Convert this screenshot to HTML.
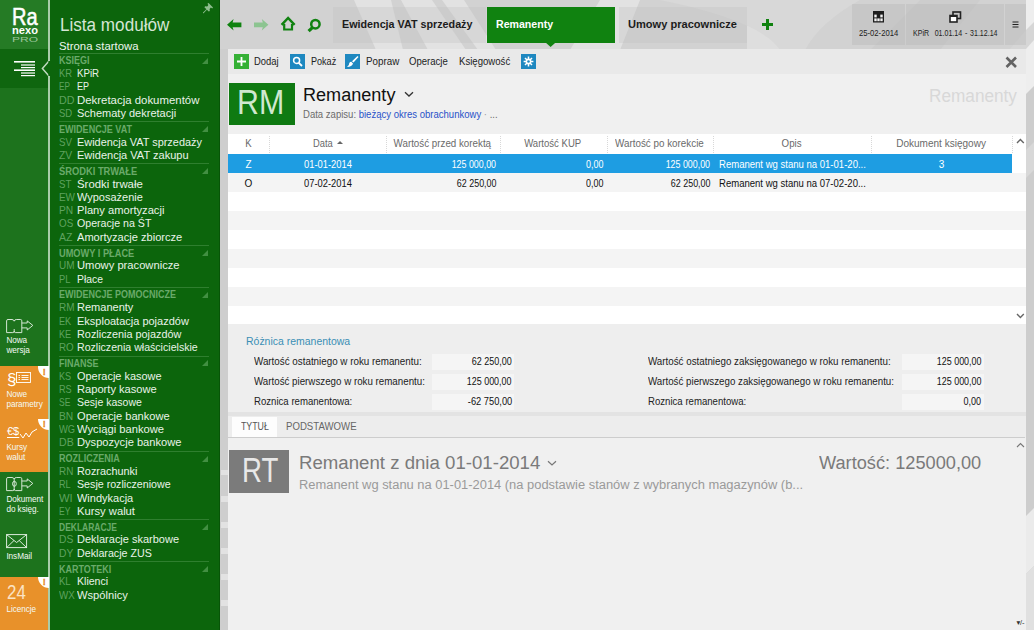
<!DOCTYPE html>
<html lang="pl"><head><meta charset="utf-8"><title>Remanenty</title>
<style>
*{box-sizing:border-box;margin:0;padding:0}
html,body{width:1034px;height:630px;overflow:hidden}
body{position:relative;font-family:"Liberation Sans","DejaVu Sans",sans-serif;font-size:11px;color:#1a1a1a;background:#dedede}
.abs,body div,body span.a{position:absolute}
#bgpat{left:220px;top:0;width:814px;height:630px;background:#dcdcdc;overflow:hidden}
/* left icon bar */
#ibar{left:0;top:0;width:49.5px;height:630px;background:#1d731d;overflow:hidden}
#ibar .act{left:0;top:49px;width:49px;height:39px;background:#0f660f}
#ibar .tile{left:0;width:48px;height:52.5px;color:#fff;font-size:8.2px;line-height:10.2px}
#ibar .or{background:#e8912a}
.tile .lbl{left:6.4px;white-space:nowrap;color:#f4faf4;letter-spacing:-0.05px}
.badge{right:-1.4px;top:0;width:11.6px;height:11.8px;background:#fff;border-radius:0 0 0 11.6px;z-index:7}
.badge i{position:absolute;left:4.9px;top:0.6px;font-style:normal;font-weight:bold;font-size:9px;line-height:10px;color:#e58a1f;-webkit-text-stroke:0.3px #e58a1f}
#vline{left:48px;top:0;width:1.7px;height:630px;background:#a9cca9;z-index:5}
/* module panel */
#mod{left:49px;top:0;width:171px;height:630px;background:#0c650c;overflow:hidden;color:#fff}
#mod .ttl{left:10.5px;top:12.5px;font-size:18px;color:#d5e6d5;white-space:nowrap;letter-spacing:-0.6px;line-height:24px;font-weight:normal}
#mod .start{left:10px;top:39px;font-size:11.3px;line-height:15px;color:#eef6ee;white-space:nowrap;letter-spacing:-0.2px}
#mod .sep{left:10px;width:150px;height:1px;background:#2f7f2f}
#mod .gh{left:10px;font-weight:bold;font-size:10.8px;line-height:14px;color:#6aaa6a;white-space:nowrap;letter-spacing:-0.2px}
#mod .tri{left:152.5px;width:0;height:0;border-bottom:6px solid #428f42;border-left:6px solid transparent}
#mod .mi{left:28px;font-size:11.3px;line-height:14px;color:#e9f3e9;white-space:nowrap}
#mod .cd{left:10px;font-size:11.3px;line-height:14px;color:#5fa25f;letter-spacing:-0.9px;white-space:nowrap}
</style></head><body>
<div id="bgpat">
<svg width="814" height="630" style="position:absolute;left:0;top:0">
 <rect x="0" y="0" width="814" height="630" fill="#d2d2d2"></rect>
 <g fill="#e2e2e2">
  <polygon points="134,0 171,0 183,50 156,50"></polygon>
  <polygon points="181,0 212,0 246,50 208,50"></polygon>
  <polygon points="222,0 244,0 276,50 258,50"></polygon>
  <polygon points="380,0 420,0 400,50 350,50"></polygon>
 </g>
 <path d="M527 26 H556 Q573 28 574 50 H527 Z" fill="#dedede"></path>
 <path d="M440 0 H640 Q600 22 585 50 H560 Q540 20 440 0 Z" fill="#d8d8d8"></path>
 <polygon points="700,0 760,0 720,50 650,50" fill="#cdcdcd"></polygon>
 <!-- right strip -->
 <rect x="806" y="0" width="8" height="630" fill="#cdcdcd"></rect>
 <polygon points="806,0 814,0 814,86 806,94" fill="#eeeeee"></polygon>
 <polygon points="790,49 806,30 814,22 814,40 806,49" fill="#d6d6d6"></polygon>
 <polygon points="806,150 814,142 814,170 806,178" fill="#d8d8d8"></polygon>
 <polygon points="806,516 814,508 814,566 806,574" fill="#ebebeb"></polygon>
 <polygon points="806,574 814,566 814,630 806,630" fill="#e0e0e0"></polygon>
 <!-- left strip -->
 <rect x="0" y="49" width="8" height="581" fill="#cecece"></rect>
 <g fill="#e2e2e2"><rect x="1" y="470" width="7" height="5"></rect><rect x="1" y="496" width="7" height="6"></rect><rect x="1" y="522" width="7" height="6"></rect><rect x="1" y="548" width="7" height="6"></rect><rect x="1" y="574" width="7" height="6"></rect><rect x="1" y="600" width="7" height="6"></rect></g>
</svg>
</div>

<div id="ibar">
 <div style="left:0;top:0;width:49px;height:49px;background:#257b25"></div>
 <div class="act"></div>
 <div style="left: 12.2px; top: 3.5px; font-weight: normal; -webkit-text-stroke: 0.55px rgb(255, 255, 255); font-size: 24px; line-height: 26px; color: rgb(255, 255, 255); white-space: nowrap; letter-spacing: 0px; transform: scaleX(0.834); transform-origin: 0px 50%;">Ra</div>
 <div style="left: 12px; top: 25px; font-weight: bold; font-size: 11px; line-height: 11px; color: rgb(255, 255, 255); white-space: nowrap; letter-spacing: 0px; transform: scaleX(1.012); transform-origin: 0px 50%;">nexo</div>
 <div style="left: 12px; top: 36px; font-size: 7px; line-height: 7px; color: rgb(156, 199, 156); white-space: nowrap; letter-spacing: 0px; transform: scaleX(1.714); transform-origin: 0px 50%;">PRO</div>
 <svg width="24" height="18" style="position:absolute;left:13px;top:60px"><g fill="#fff"><rect x="1" y="1" width="21" height="1.6"></rect><rect x="8" y="4.4" width="14" height="1.2"></rect><rect x="8" y="7" width="14" height="1.2"></rect><rect x="1" y="9.4" width="21" height="1.6"></rect><rect x="8" y="12.4" width="14" height="1.2"></rect><rect x="8" y="15" width="14" height="1.2"></rect></g></svg>

 <div class="tile" style="top:313px">
  <svg width="30" height="17" style="position:absolute;left:6px;top:5px" fill="none" stroke="#e6f2e6" stroke-width="0.9"><path d="M0.6 2.8 Q0.6 1.5 2 1.5 H6 Q7.8 1.5 8.2 3.2 Q8.6 1.5 10.4 1.5 H14.4 Q15.8 1.5 15.8 2.8 V14.6 H9.6 Q8.2 14.6 8.2 13.2 Q8.2 14.6 6.8 14.6 H0.6 Z M8.2 11 V13.6 M15.8 5 H21.2 V2.9 L26.8 7.4 L21.2 12 V9.9 H15.8"></path></svg>
  <div class="lbl" style="top:22.5px">Nowa<br>wersja</div>
 </div>
 <div class="tile or" style="top:366.3px;height:53px">
  <div style="left:7px;top:3.6px;font-size:17px;line-height:20px;color:#fff">§</div>
  <svg width="16" height="12" style="position:absolute;left:16px;top:6px" fill="none" stroke="#fff" stroke-width="0.9"><rect x="0.5" y="0.5" width="14" height="10"></rect><path d="M2.5 3.5H4 M5.5 3.5H12.5 M2.5 5.5H4 M5.5 5.5H12.5 M2.5 7.5H4 M5.5 7.5H12.5"></path></svg>
  <div class="lbl" style="top:23.5px">Nowe<br>parametry</div>
  <div class="badge"><i>!</i></div>
 </div>
 <div class="tile or" style="top:418.5px;height:53.2px">
  <div style="left:7px;top:5px;font-size:11px;line-height:14px;color:#fff;text-decoration:underline;text-underline-offset:2px;text-decoration-thickness:1px;letter-spacing:0px">€$</div>
  <svg width="20" height="14" style="position:absolute;left:19.5px;top:7px" fill="none" stroke="#fff" stroke-width="1"><path d="M0 8 L3 12 L6 7 L9 11 L12 6 L17 3"></path></svg>
  <div class="lbl" style="top:24.5px">Kursy<br>walut</div>
  <div class="badge"><i>!</i></div>
 </div>
 <div class="tile" style="top:471.7px;height:52px">
  <svg width="30" height="17" style="position:absolute;left:6px;top:4.8px" fill="none" stroke="#e6f2e6" stroke-width="0.9"><path d="M0.6 2.8 Q0.6 1.5 2 1.5 H6 Q7.8 1.5 8.2 3.2 Q8.6 1.5 10.4 1.5 H14.4 Q15.8 1.5 15.8 2.8 V14.6 H9.6 Q8.2 14.6 8.2 13.2 Q8.2 14.6 6.8 14.6 H0.6 Z M8.2 3.2 V14 M15.8 5 H21.2 V2.9 L26.8 7.4 L21.2 12 V9.9 H15.8"></path><ellipse cx="8.4" cy="7.8" rx="1.9" ry="2.5"></ellipse></svg>
  <div class="lbl" style="top:23px">Dokument<br>do księg.</div>
 </div>
 <div class="tile" style="top:524px">
  <svg width="24" height="16" style="position:absolute;left:6px;top:9.9px" fill="none" stroke="#e4f0e4" stroke-width="0.95"><rect x="0.6" y="0.6" width="20" height="13"></rect><path d="M0.6 0.6 L10.6 8.5 L20.6 0.6 M0.6 13.6 L8 6.5 M20.6 13.6 L13.2 6.5"></path></svg>
  <div class="lbl" style="top:27.5px">InsMail</div>
 </div>
 <div class="tile or" style="top:576.5px;height:54px">
  <div style="left: 6.8px; top: 3px; font-size: 20px; line-height: 24px; color: rgb(251, 227, 196); white-space: nowrap; letter-spacing: 0px; transform: scaleX(0.845); transform-origin: 0px 50%;">24</div>
  <div class="lbl" style="top:28px">Licencje</div>
  <div class="badge"><i>!</i></div>
 </div>
</div>
<div id="vline"></div>
<svg width="10" height="18" style="position:absolute;left:40.5px;top:59.5px;z-index:6"><path d="M8.6 0.3 L1.4 8.5 L8.6 16.7" fill="#0c650c" stroke="#c0d9c0" stroke-width="1.5"></path><rect x="7.4" y="1" width="2.6" height="15" fill="#0c650c"></rect></svg>

<div id="mod">
 <div class="ttl" style="letter-spacing: 0px; transform: scaleX(0.95); transform-origin: 0px 50%;">Lista modułów</div>
 <svg width="11" height="11" style="position:absolute;left:153.6px;top:3.2px"><path d="M4.4 0.8 L5.6 0 L10 4.4 L9.2 5.4 L7.9 4.6 L6.6 6 L6.8 8 L5.8 8.6 L3.9 6.7 L0.6 10.2 L0 10.2 L0 9.6 L3.4 6.2 L1.4 4.2 L2.2 3.2 L4.2 3.4 L5.4 2 Z" fill="#8fbe8f"></path></svg>
 <div class="start" style="letter-spacing: 0px; transform: scaleX(1.005); transform-origin: 0px 50%;">Strona startowa</div>
<div class="sep" style="top:52.8px"></div>
<div class="gh" style="top: 53.2px; letter-spacing: 0px; transform: scaleX(0.833); transform-origin: 0px 50%;">KSIĘGI</div>
<div class="tri" style="top:57.7px"></div>
<div class="cd" style="top: 66.1px; letter-spacing: 0px; transform: scaleX(0.828); transform-origin: 0px 50%;">KR</div><div class="mi" style="top: 66.1px; letter-spacing: 0px; transform: scaleX(0.858); transform-origin: 0px 50%;">KPiR</div>
<div class="cd" style="top: 79.4px; letter-spacing: 0px; transform: scaleX(0.723); transform-origin: 0px 50%;">EP</div><div class="mi" style="top: 79.4px; letter-spacing: 0px; transform: scaleX(0.796); transform-origin: 0px 50%;">EP</div>
<div class="cd" style="top: 92.7px; letter-spacing: 0px; transform: scaleX(0.949); transform-origin: 0px 50%;">DD</div><div class="mi" style="top: 92.7px; letter-spacing: 0px; transform: scaleX(1.01); transform-origin: 0px 50%;">Dekretacja dokumentów</div>
<div class="cd" style="top: 105.9px; letter-spacing: 0px; transform: scaleX(0.841); transform-origin: 0px 50%;">SD</div><div class="mi" style="top: 105.9px; letter-spacing: 0px; transform: scaleX(0.974); transform-origin: 0px 50%;">Schematy dekretacji</div>
<div class="sep" style="top:121.3px"></div>
<div class="gh" style="top: 121.7px; letter-spacing: 0px; transform: scaleX(0.838); transform-origin: 0px 50%;">EWIDENCJE VAT</div>
<div class="tri" style="top:126.2px"></div>
<div class="cd" style="top: 134.6px; letter-spacing: 0px; transform: scaleX(0.862); transform-origin: 0px 50%;">SV</div><div class="mi" style="top: 134.6px; letter-spacing: 0px; transform: scaleX(0.966); transform-origin: 0px 50%;">Ewidencja VAT sprzedaży</div>
<div class="cd" style="top: 147.9px; letter-spacing: 0px; transform: scaleX(0.914); transform-origin: 0px 50%;">ZV</div><div class="mi" style="top: 147.9px; letter-spacing: 0px; transform: scaleX(0.976); transform-origin: 0px 50%;">Ewidencja VAT zakupu</div>
<div class="sep" style="top:163.3px"></div>
<div class="gh" style="top: 163.7px; letter-spacing: 0px; transform: scaleX(0.865); transform-origin: 0px 50%;">ŚRODKI TRWAŁE</div>
<div class="tri" style="top:168.2px"></div>
<div class="cd" style="top: 176.6px; letter-spacing: 0px; transform: scaleX(0.859); transform-origin: 0px 50%;">ST</div><div class="mi" style="top: 176.6px; letter-spacing: 0px; transform: scaleX(1.008); transform-origin: 0px 50%;">Środki trwałe</div>
<div class="cd" style="top: 189.9px; letter-spacing: 0px; transform: scaleX(0.879); transform-origin: 0px 50%;">EW</div><div class="mi" style="top: 189.9px; letter-spacing: 0px; transform: scaleX(0.972); transform-origin: 0px 50%;">Wyposażenie</div>
<div class="cd" style="top: 203.2px; letter-spacing: 0px; transform: scaleX(0.904); transform-origin: 0px 50%;">PN</div><div class="mi" style="top: 203.2px; letter-spacing: 0px; transform: scaleX(0.987); transform-origin: 0px 50%;">Plany amortyzacji</div>
<div class="cd" style="top: 216.4px; letter-spacing: 0px; transform: scaleX(0.87); transform-origin: 0px 50%;">OS</div><div class="mi" style="top: 216.4px; letter-spacing: 0px; transform: scaleX(0.94); transform-origin: 0px 50%;">Operacje na ŚT</div>
<div class="cd" style="top: 229.7px; letter-spacing: 0px; transform: scaleX(0.935); transform-origin: 0px 50%;">AZ</div><div class="mi" style="top: 229.7px; letter-spacing: 0px; transform: scaleX(0.98); transform-origin: 0px 50%;">Amortyzacje zbiorcze</div>
<div class="sep" style="top:245.1px"></div>
<div class="gh" style="top: 245.5px; letter-spacing: 0px; transform: scaleX(0.855); transform-origin: 0px 50%;">UMOWY I PŁACE</div>
<div class="tri" style="top:250.0px"></div>
<div class="cd" style="top: 258.4px; letter-spacing: 0px; transform: scaleX(0.882); transform-origin: 0px 50%;">UM</div><div class="mi" style="top: 258.4px; letter-spacing: 0px; transform: scaleX(0.99); transform-origin: 0px 50%;">Umowy pracownicze</div>
<div class="cd" style="top: 271.7px; letter-spacing: 0px; transform: scaleX(0.824); transform-origin: 0px 50%;">PL</div><div class="mi" style="top: 271.7px; letter-spacing: 0px; transform: scaleX(0.916); transform-origin: 0px 50%;">Płace</div>
<div class="sep" style="top:287.0px"></div>
<div class="gh" style="top: 287.4px; letter-spacing: 0px; transform: scaleX(0.834); transform-origin: 0px 50%;">EWIDENCJE POMOCNICZE</div>
<div class="tri" style="top:291.9px"></div>
<div class="cd" style="top: 300.4px; letter-spacing: 0px; transform: scaleX(0.882); transform-origin: 0px 50%;">RM</div><div class="mi" style="top: 300.4px; letter-spacing: 0px; transform: scaleX(0.976); transform-origin: 0px 50%;">Remanenty</div>
<div class="cd" style="top: 313.6px; letter-spacing: 0px; transform: scaleX(0.809); transform-origin: 0px 50%;">EK</div><div class="mi" style="top: 313.6px; letter-spacing: 0px; transform: scaleX(0.973); transform-origin: 0px 50%;">Eksploatacja pojazdów</div>
<div class="cd" style="top: 326.9px; letter-spacing: 0px; transform: scaleX(0.809); transform-origin: 0px 50%;">KE</div><div class="mi" style="top: 326.9px; letter-spacing: 0px; transform: scaleX(0.961); transform-origin: 0px 50%;">Rozliczenia pojazdów</div>
<div class="cd" style="top: 340.2px; letter-spacing: 0px; transform: scaleX(0.867); transform-origin: 0px 50%;">RO</div><div class="mi" style="top: 340.2px; letter-spacing: 0px; transform: scaleX(0.938); transform-origin: 0px 50%;">Rozliczenia właścicielskie</div>
<div class="sep" style="top:355.5px"></div>
<div class="gh" style="top: 355.9px; letter-spacing: 0px; transform: scaleX(0.836); transform-origin: 0px 50%;">FINANSE</div>
<div class="tri" style="top:360.4px"></div>
<div class="cd" style="top: 368.9px; letter-spacing: 0px; transform: scaleX(0.809); transform-origin: 0px 50%;">KS</div><div class="mi" style="top: 368.9px; letter-spacing: 0px; transform: scaleX(0.969); transform-origin: 0px 50%;">Operacje kasowe</div>
<div class="cd" style="top: 382.1px; letter-spacing: 0px; transform: scaleX(0.809); transform-origin: 0px 50%;">RS</div><div class="mi" style="top: 382.1px; letter-spacing: 0px; transform: scaleX(0.985); transform-origin: 0px 50%;">Raporty kasowe</div>
<div class="cd" style="top: 395.4px; letter-spacing: 0px; transform: scaleX(0.756); transform-origin: 0px 50%;">SE</div><div class="mi" style="top: 395.4px; letter-spacing: 0px; transform: scaleX(0.93); transform-origin: 0px 50%;">Sesje kasowe</div>
<div class="cd" style="top: 408.7px; letter-spacing: 0px; transform: scaleX(0.904); transform-origin: 0px 50%;">BN</div><div class="mi" style="top: 408.7px; letter-spacing: 0px; transform: scaleX(0.984); transform-origin: 0px 50%;">Operacje bankowe</div>
<div class="cd" style="top: 421.9px; letter-spacing: 0px; transform: scaleX(0.822); transform-origin: 0px 50%;">WG</div><div class="mi" style="top: 421.9px; letter-spacing: 0px; transform: scaleX(0.992); transform-origin: 0px 50%;">Wyciągi bankowe</div>
<div class="cd" style="top: 435.2px; letter-spacing: 0px; transform: scaleX(0.936); transform-origin: 0px 50%;">DB</div><div class="mi" style="top: 435.2px; letter-spacing: 0px; transform: scaleX(0.984); transform-origin: 0px 50%;">Dyspozycje bankowe</div>
<div class="sep" style="top:450.6px"></div>
<div class="gh" style="top: 451px; letter-spacing: 0px; transform: scaleX(0.839); transform-origin: 0px 50%;">ROZLICZENIA</div>
<div class="tri" style="top:455.5px"></div>
<div class="cd" style="top: 463.9px; letter-spacing: 0px; transform: scaleX(0.876); transform-origin: 0px 50%;">RN</div><div class="mi" style="top: 463.9px; letter-spacing: 0px; transform: scaleX(0.963); transform-origin: 0px 50%;">Rozrachunki</div>
<div class="cd" style="top: 477.2px; letter-spacing: 0px; transform: scaleX(0.81); transform-origin: 0px 50%;">RL</div><div class="mi" style="top: 477.2px; letter-spacing: 0px; transform: scaleX(0.944); transform-origin: 0px 50%;">Sesje rozliczeniowe</div>
<div class="cd" style="top: 490.5px; letter-spacing: 0px; transform: scaleX(0.992); transform-origin: 0px 50%;">WI</div><div class="mi" style="top: 490.5px; letter-spacing: 0px; transform: scaleX(0.973); transform-origin: 0px 50%;">Windykacja</div>
<div class="cd" style="top: 503.7px; letter-spacing: 0px; transform: scaleX(0.756); transform-origin: 0px 50%;">EY</div><div class="mi" style="top: 503.7px; letter-spacing: 0px; transform: scaleX(0.993); transform-origin: 0px 50%;">Kursy walut</div>
<div class="sep" style="top:519.1px"></div>
<div class="gh" style="top: 519.5px; letter-spacing: 0px; transform: scaleX(0.786); transform-origin: 0px 50%;">DEKLARACJE</div>
<div class="tri" style="top:524.0px"></div>
<div class="cd" style="top: 532.4px; letter-spacing: 0px; transform: scaleX(0.911); transform-origin: 0px 50%;">DS</div><div class="mi" style="top: 532.4px; letter-spacing: 0px; transform: scaleX(0.973); transform-origin: 0px 50%;">Deklaracje skarbowe</div>
<div class="cd" style="top: 545.7px; letter-spacing: 0px; transform: scaleX(0.911); transform-origin: 0px 50%;">DY</div><div class="mi" style="top: 545.7px; letter-spacing: 0px; transform: scaleX(0.946); transform-origin: 0px 50%;">Deklaracje ZUS</div>
<div class="sep" style="top:561.1px"></div>
<div class="gh" style="top: 561.5px; letter-spacing: 0px; transform: scaleX(0.833); transform-origin: 0px 50%;">KARTOTEKI</div>
<div class="tri" style="top:566.0px"></div>
<div class="cd" style="top: 574.4px; letter-spacing: 0px; transform: scaleX(0.846); transform-origin: 0px 50%;">KL</div><div class="mi" style="top: 574.4px; letter-spacing: 0px; transform: scaleX(0.934); transform-origin: 0px 50%;">Klienci</div>
<div class="cd" style="top: 587.7px; letter-spacing: 0px; transform: scaleX(0.862); transform-origin: 0px 50%;">WX</div><div class="mi" style="top: 587.7px; letter-spacing: 0px; transform: scaleX(0.987); transform-origin: 0px 50%;">Wspólnicy</div>
</div>

<style>
#main div, #main span.a{position:absolute}
.nw{white-space:nowrap}
.tab{top:7px;height:35.5px;font-weight:bold;font-size:11.5px;line-height:35px;color:#1c1c1c;white-space:nowrap;letter-spacing:-0.35px}
.tbtn{top:4px;height:41px;background:rgba(175,175,175,0.3)}
.tb{top:49px;left:228px;width:798px;height:25px;background:#e9e9e9}
.tbt{top:55px;font-size:10.3px;line-height:13px;color:#222;white-space:nowrap;letter-spacing:-0.2px;font-weight:bold;font-weight:normal}
#grid{left:228px;top:133.8px;width:798px;height:190.3px;background:#fff;overflow:hidden}
#grid .row{left:0;width:784px;height:19px}
#grid .gx{left:784px;width:14px;height:19px;background:#f4f4f4}
#grid .g{background:#f4f4f4}
#grid .sel{background:#1e9de2}
#grid .hd{top:0;height:20px;line-height:20px;font-size:10.3px;color:#6a6a6a;white-space:nowrap;letter-spacing:-0.2px;text-align:center}
#grid .c{font-size:10px;line-height:21px;white-space:nowrap;color:#111}
#grid .sel .c{color:#fff}
#grid .vs{top:2px;width:0;height:17px;border-left:1px dotted #d8d8d8}
.sl{font-size:10.3px;line-height:14px;color:#222;white-space:nowrap;letter-spacing:-0.2px}
.sb{height:16px;background:#f5f5f5;font-size:10.3px;line-height:16.6px;text-align:right;padding-right:2px;color:#111;letter-spacing:-0.3px;white-space:nowrap}
</style>
<div style="position:absolute;left:219px;top:0;width:1px;height:630px;background:#075507"></div>
<div id="main" style="position:absolute;left:0;top:0;width:1034px;height:630px">
 <!-- nav icons -->
 <svg width="15" height="12" style="position:absolute;left:226.7px;top:19.1px"><path d="M0 5.8 L6.6 0 L5.6 3.6 H14.4 V8.2 H5.6 L6.6 11.6 Z" fill="#108210"></path></svg>
 <svg width="15" height="12" style="position:absolute;left:253.5px;top:19.1px"><path d="M14.4 5.8 L7.8 0 L8.8 3.6 H0 V8.2 H8.8 L7.8 11.6 Z" fill="#8cc490"></path></svg>
 <svg width="16" height="15" style="position:absolute;left:280px;top:16px"><path d="M1.6 8.8 L8.1 2 L14.6 8.8" fill="none" stroke="#108210" stroke-width="2.5" stroke-linejoin="miter"></path><path d="M4.2 8 V13.5 H12 V8" fill="none" stroke="#108210" stroke-width="2.2"></path></svg>
 <svg width="16" height="16" style="position:absolute;left:306px;top:17px"><circle cx="9.4" cy="7.2" r="4.2" fill="none" stroke="#108210" stroke-width="2.5"></circle><path d="M6.4 10.6 L2.6 14.2" stroke="#108210" stroke-width="3.2" stroke-linecap="butt"></path></svg>
 <!-- tabs -->
 <div class="tab" style="left:333px;width:153.3px;background:rgba(193,193,193,0.32);padding-left:8.7px"><span style="letter-spacing: 0px; display: inline-block; transform: scaleX(0.935); transform-origin: 0px 50%;">Ewidencja VAT sprzedaży</span></div>
 <div class="tab" style="left:487px;width:128px;background:#108210;color:#fff;padding-left:9px"><span style="letter-spacing: 0px; display: inline-block; transform: scaleX(0.921); transform-origin: 0px 50%;">Remanenty</span></div>
 <svg width="12" height="6" style="position:absolute;left:545px;top:42px"><path d="M0 0 H11.2 L5.6 5 Z" fill="#108210"></path></svg>
 <div class="tab" style="left:619px;width:128px;background:rgba(193,193,193,0.32);padding-left:8.5px"><span style="letter-spacing: 0px; display: inline-block; transform: scaleX(0.962); transform-origin: 0px 50%;">Umowy pracownicze</span></div>
 <svg width="12" height="12" style="position:absolute;left:761.8px;top:18.8px"><path d="M4 0 H7 V4 H11 V7 H7 V11 H4 V7 H0 V4 H4 Z" fill="#108210"></path></svg>
 <!-- top right buttons -->
 <div class="tbtn" style="left:852px;width:53px"></div>
 <div class="tbtn" style="left:906px;width:98px"></div>
 <div class="tbtn" style="left:1005px;width:21px"></div>
 <svg width="12" height="12" style="position:absolute;left:872.8px;top:11.3px"><rect x="0" y="0" width="11" height="11.5" fill="#1d1d1d"></rect><g fill="#f2f2f2"><rect x="1.3" y="3.6" width="2.4" height="2.8"></rect><rect x="7.3" y="3.6" width="2.4" height="2.8"></rect><rect x="1.3" y="7.4" width="2.4" height="2.8"></rect><rect x="4.3" y="7.4" width="2.4" height="2.8"></rect><rect x="7.3" y="7.4" width="2.4" height="2.8"></rect></g></svg>
 <div class="nw" style="left: 859.4px; top: 28px; font-size: 8.2px; line-height: 11px; color: rgb(34, 34, 34); letter-spacing: 0px; transform: scaleX(0.936); transform-origin: 0px 50%;">25-02-2014</div>
 <svg width="13" height="12" style="position:absolute;left:949px;top:11px"><rect x="4" y="1" width="7.5" height="6.5" fill="none" stroke="#222" stroke-width="1.6"></rect><rect x="1" y="4.5" width="7" height="6.5" fill="#fff" stroke="#222" stroke-width="1.6"></rect><rect x="1" y="4" width="7" height="2" fill="#222"></rect></svg>
 <div class="nw" style="left: 913px; top: 28px; font-size: 8.2px; line-height: 11px; color: rgb(34, 34, 34); letter-spacing: 0px; word-spacing: 1px; transform: scaleX(0.86); transform-origin: 0px 50%;">KPiR&nbsp; 01.01.14 - 31.12.14</div>
 <svg width="7" height="7" style="position:absolute;left:1012px;top:21px"><path d="M0.5 1H6.5 M0.5 3.5H6.5 M0.5 6H6.5" stroke="#222" stroke-width="1"></path></svg>

 <!-- content panel -->
 <div style="left:228px;top:74px;width:798px;height:556px;background:#f0f0f0"></div>
 <div class="tb"></div>
 <svg width="15" height="15" style="position:absolute;left:234px;top:54.3px"><rect width="15" height="15" fill="#35b035"></rect><path d="M6.6 3 H8.4 V6.6 H12 V8.4 H8.4 V12 H6.6 V8.4 H3 V6.6 H6.6 Z" fill="#fff"></path></svg>
 <div class="tbt" style="left: 254px; letter-spacing: 0px; transform: scaleX(0.914); transform-origin: 0px 50%;">Dodaj</div>
 <svg width="15" height="15" style="position:absolute;left:290px;top:54.3px"><rect width="15" height="15" fill="#1e88c0"></rect><circle cx="6.6" cy="6.4" r="3" fill="none" stroke="#fff" stroke-width="1.5"></circle><path d="M8.8 8.8 L12 12" stroke="#fff" stroke-width="1.8"></path></svg>
 <div class="tbt" style="left: 310.5px; letter-spacing: 0px; transform: scaleX(0.88); transform-origin: 0px 50%;">Pokaż</div>
 <svg width="15" height="15" style="position:absolute;left:345.2px;top:54.3px"><rect width="15" height="15" fill="#1e88c0"></rect><path d="M12.5 2 L13.5 3 L8.5 8.5 L7 7.2 Z M6.3 7.8 L8 9.4 Q7 12.5 2 13 Q4.5 11 4.3 9 Q5 7.8 6.3 7.8 Z" fill="#fff"></path></svg>
 <div class="tbt" style="left: 365.5px; letter-spacing: 0px; transform: scaleX(0.951); transform-origin: 0px 50%;">Popraw</div>
 <div class="tbt" style="left: 409px; letter-spacing: 0px; transform: scaleX(0.929); transform-origin: 0px 50%;">Operacje</div>
 <div class="tbt" style="left: 459px; letter-spacing: 0px; transform: scaleX(0.932); transform-origin: 0px 50%;">Księgowość</div>
 <svg width="15" height="15" style="position:absolute;left:521.2px;top:54.2px"><rect width="15" height="15" fill="#1e88c0"></rect><g stroke="#fff" stroke-width="1.5"><path d="M7.5 2.6V12.4 M2.6 7.5H12.4 M4 4L11 11 M11 4L4 11"></path></g><circle cx="7.5" cy="7.5" r="2.9" fill="#fff"></circle><circle cx="7.5" cy="7.5" r="1.3" fill="#1e88c0"></circle></svg>
 <svg width="13" height="13" style="position:absolute;left:1004.5px;top:55.5px"><path d="M1.5 1.5 L11 11 M11 1.5 L1.5 11" stroke="#636363" stroke-width="2.6"></path></svg>

 <!-- header -->
 <div style="left:228.5px;top:82.5px;width:66px;height:42.5px;background:#0f7a12"></div>
 <div class="nw" style="left: 237.4px; top: 81.7px; font-size: 35px; line-height: 40px; color: rgb(207, 232, 207); letter-spacing: 0px; transform: scaleX(0.867); transform-origin: 0px 50%;">RM</div>
 <div class="nw" style="left: 303.3px; top: 81.5px; font-size: 18px; line-height: 26px; color: rgb(17, 17, 17); letter-spacing: 0px; transform: scaleX(1.004); transform-origin: 0px 50%;">Remanenty</div>
 <svg width="10" height="7" style="position:absolute;left:404px;top:91px"><path d="M1 1.2 L5 5 L9 1.2" fill="none" stroke="#333" stroke-width="1.3"></path></svg>
 <div class="nw" style="left: 303px; top: 108.8px; font-size: 10px; line-height: 12px; color: rgb(107, 107, 107); letter-spacing: 0px; transform: scaleX(0.954); transform-origin: 0px 50%;">Data zapisu: <span style="color:#2a52c8">bieżący okres obrachunkowy</span> <span style="color:#999">·</span> ...</div>
 <div class="nw" style="left: 929px; top: 83.5px; font-size: 17.5px; line-height: 24px; color: rgb(216, 216, 216); letter-spacing: 0px; transform: scaleX(0.983); transform-origin: 0px 50%;">Remanenty</div>

 <!-- grid -->
 <div id="grid">
  <div class="hd" style="left:0px;width:41px"><span style="letter-spacing: 0px; display: inline-block; transform: scaleX(0.931); transform-origin: 50% 50%;">K</span></div>
<div class="hd" style="left:41px;width:117px"><span style="letter-spacing: 0px; display: inline-block; transform: scaleX(0.91); transform-origin: 50% 50%;">Data</span><span style="display:inline-block;width:0;height:0;margin-left:4px;border-left:3px solid transparent;border-right:3px solid transparent;border-bottom:3.6px solid #666;position:relative;top:-2.5px"></span></div>
<div class="vs" style="left:41px"></div>
<div class="hd" style="left:158px;width:113.5px"><span style="letter-spacing: 0px; display: inline-block; transform: scaleX(0.95); transform-origin: 50% 50%;">Wartość przed korektą</span></div>
<div class="vs" style="left:158px"></div>
<div class="hd" style="left:271.5px;width:107.0px"><span style="letter-spacing: 0px; display: inline-block; transform: scaleX(0.93); transform-origin: 50% 50%;">Wartość KUP</span></div>
<div class="vs" style="left:271.5px"></div>
<div class="hd" style="left:378.5px;width:106.5px"><span style="letter-spacing: 0px; display: inline-block; transform: scaleX(0.955); transform-origin: 50% 50%;">Wartość po korekcie</span></div>
<div class="vs" style="left:378.5px"></div>
<div class="hd" style="left:485px;width:158px"><span style="letter-spacing: 0px; display: inline-block; transform: scaleX(0.944); transform-origin: 50% 50%;">Opis</span></div>
<div class="vs" style="left:485px"></div>
<div class="hd" style="left:643px;width:141px"><span style="letter-spacing: 0px; display: inline-block; transform: scaleX(0.974); transform-origin: 50% 50%;">Dokument księgowy</span></div>
<div class="vs" style="left:643px"></div>
<div class="vs" style="left:784px"></div>
<div class="row sel" style="top:20.2px"><div class="c" style="left:0;width:41px;text-align:center">Z</div><div class="c" style="left: 75.5px; letter-spacing: 0px; transform: scaleX(0.936); transform-origin: 0px 50%;">01-01-2014</div><div class="c" style="right: 515.5px; letter-spacing: 0px; transform: scaleX(0.887); transform-origin: 100% 50%;">125 000,00</div><div class="c" style="right: 408.5px; letter-spacing: 0px; transform: scaleX(0.894); transform-origin: 100% 50%;">0,00</div><div class="c" style="right: 301.5px; letter-spacing: 0px; transform: scaleX(0.887); transform-origin: 100% 50%;">125 000,00</div><div class="c" style="left: 491px; letter-spacing: 0px; transform: scaleX(0.954); transform-origin: 0px 50%;">Remanent wg stanu na 01-01-20...</div><div class="c" style="left:643px;width:141px;text-align:center">3</div></div>
<div class="row g" style="top:39.2px"><div class="c" style="left:0;width:41px;text-align:center">O</div><div class="c" style="left: 75.5px; letter-spacing: 0px; transform: scaleX(0.936); transform-origin: 0px 50%;">07-02-2014</div><div class="c" style="right: 515.5px; letter-spacing: 0px; transform: scaleX(0.892); transform-origin: 100% 50%;">62 250,00</div><div class="c" style="right: 408.5px; letter-spacing: 0px; transform: scaleX(0.894); transform-origin: 100% 50%;">0,00</div><div class="c" style="right: 301.5px; letter-spacing: 0px; transform: scaleX(0.892); transform-origin: 100% 50%;">62 250,00</div><div class="c" style="left: 491px; letter-spacing: 0px; transform: scaleX(0.954); transform-origin: 0px 50%;">Remanent wg stanu na 07-02-20...</div><div class="c" style="left:643px;width:141px;text-align:center"></div></div>
<div class="gx" style="top:39.2px"></div>
<div class="row " style="top:58.2px"></div>
<div class="row g" style="top:77.2px"></div>
<div class="gx" style="top:77.2px"></div>
<div class="row " style="top:96.2px"></div>
<div class="row g" style="top:115.2px"></div>
<div class="gx" style="top:115.2px"></div>
<div class="row " style="top:134.2px"></div>
<div class="row g" style="top:153.2px"></div>
<div class="gx" style="top:153.2px"></div>
<div class="row " style="top:172.2px"></div>
 </div>
 <svg width="9" height="6" style="position:absolute;left:1016.3px;top:138px"><path d="M1 5 L4.4 1.6 L7.8 5" fill="none" stroke="#666" stroke-width="1.4"></path></svg>
 <svg width="9" height="6" style="position:absolute;left:1016.3px;top:313px"><path d="M1 1 L4.4 4.4 L7.8 1" fill="none" stroke="#666" stroke-width="1.4"></path></svg>

 <!-- summary -->
 <div style="left:228px;top:324.1px;width:798px;height:88px;background:#eeeeee"></div>
 <div style="left:228px;top:412px;width:798px;height:4px;background:#e3e3e3"></div>
 <div class="nw" style="left: 245.8px; top: 333.7px; font-size: 10.5px; line-height: 14px; color: rgb(58, 142, 181); letter-spacing: 0px; transform: scaleX(0.997); transform-origin: 0px 50%;">Różnica remanentowa</div>
 <div class="sl" style="left: 253.7px; top: 355px; letter-spacing: 0px; transform: scaleX(0.953); transform-origin: 0px 50%;">Wartość ostatniego w roku remanentu:</div>
 <div class="sl" style="left: 253.7px; top: 375px; letter-spacing: 0px; transform: scaleX(0.947); transform-origin: 0px 50%;">Wartość pierwszego w roku remanentu:</div>
 <div class="sl" style="left: 253.7px; top: 395px; letter-spacing: 0px; transform: scaleX(0.933); transform-origin: 0px 50%;">Roznica remanentowa:</div>
 <div class="sb" style="left:432px;top:353.5px;width:82px"><span style="letter-spacing: 0px; display: inline-block; transform: scaleX(0.873); transform-origin: 100% 50%;">62 250,00</span></div>
 <div class="sb" style="left:432px;top:373.5px;width:82px"><span style="letter-spacing: 0px; display: inline-block; transform: scaleX(0.869); transform-origin: 100% 50%;">125 000,00</span></div>
 <div class="sb" style="left:432px;top:393.5px;width:82px"><span style="letter-spacing: 0px; display: inline-block; transform: scaleX(0.902); transform-origin: 100% 50%;">-62 750,00</span></div>
 <div class="sl" style="left: 648.4px; top: 355px; letter-spacing: 0px; transform: scaleX(0.95); transform-origin: 0px 50%;">Wartość ostatniego zaksięgowanego w roku remanentu:</div>
 <div class="sl" style="left: 648.4px; top: 375px; letter-spacing: 0px; transform: scaleX(0.946); transform-origin: 0px 50%;">Wartość pierwszego zaksięgowanego w roku remanentu:</div>
 <div class="sl" style="left: 648.4px; top: 395px; letter-spacing: 0px; transform: scaleX(0.933); transform-origin: 0px 50%;">Roznica remanentowa:</div>
 <div class="sb" style="left:901.5px;top:353.5px;width:82px"><span style="letter-spacing: 0px; display: inline-block; transform: scaleX(0.869); transform-origin: 100% 50%;">125 000,00</span></div>
 <div class="sb" style="left:901.5px;top:373.5px;width:82px"><span style="letter-spacing: 0px; display: inline-block; transform: scaleX(0.869); transform-origin: 100% 50%;">125 000,00</span></div>
 <div class="sb" style="left:901.5px;top:393.5px;width:82px"><span style="letter-spacing: 0px; display: inline-block; transform: scaleX(0.878); transform-origin: 100% 50%;">0,00</span></div>

 <!-- lower tabs -->
 <div style="left:228px;top:416px;width:798px;height:21.5px;background:#ededed"></div>
 <div style="left:232px;top:416.5px;width:45px;height:21px;background:#fdfdfd"></div>
 <div class="nw" style="left: 240.5px; top: 419.5px; font-size: 10.3px; line-height: 13px; color: rgb(85, 85, 85); letter-spacing: 0px; transform: scaleX(0.852); transform-origin: 0px 50%;">TYTUŁ</div>
 <div class="nw" style="left: 285.5px; top: 419.5px; font-size: 10.3px; line-height: 13px; color: rgb(102, 102, 102); letter-spacing: 0px; transform: scaleX(0.935); transform-origin: 0px 50%;">PODSTAWOWE</div>
 <div style="left:228px;top:437.2px;width:797px;height:1px;background:#cdcdcd"></div>
 <svg width="9" height="6" style="position:absolute;left:1016.3px;top:441.7px"><path d="M1 5 L4.5 1.5 L8 5" fill="none" stroke="#777" stroke-width="1.1"></path></svg>

 <!-- RT -->
 <div style="left:228.5px;top:450.2px;width:60.7px;height:42.6px;background:#7b7b7b"></div>
 <div class="nw" style="left: 241.7px; top: 450.3px; font-size: 35.5px; line-height: 40px; color: rgb(232, 232, 232); letter-spacing: 0px; transform: scaleX(0.778); transform-origin: 0px 50%;">RT</div>
 <div class="nw" style="left: 298.9px; top: 451px; font-size: 17.6px; line-height: 24px; color: rgb(122, 122, 122); letter-spacing: 0px; transform: scaleX(1.059); transform-origin: 0px 50%;">Remanent z dnia 01-01-2014</div>
 <svg width="10" height="7" style="position:absolute;left:547px;top:460px"><path d="M1 1.2 L5 5 L9 1.2" fill="none" stroke="#777" stroke-width="1.2"></path></svg>
 <div class="nw" style="left: 818.6px; top: 450.7px; font-size: 18px; line-height: 24px; color: rgb(122, 122, 122); letter-spacing: 0px; transform: scaleX(1.011); transform-origin: 0px 50%;">Wartość: 125000,00</div>
 <div class="nw" style="left: 298.9px; top: 477.6px; font-size: 12.3px; line-height: 14px; color: rgb(154, 154, 154); letter-spacing: 0px; transform: scaleX(1.049); transform-origin: 0px 50%;">Remanent wg stanu na 01-01-2014 (na podstawie stanów z wybranych magazynów (b...</div>
 <div class="nw" style="left:1016.5px;top:617.5px;font-size:7.5px;line-height:9px;color:#333;letter-spacing:-0.2px">▾/-</div>
</div>


</body></html>
